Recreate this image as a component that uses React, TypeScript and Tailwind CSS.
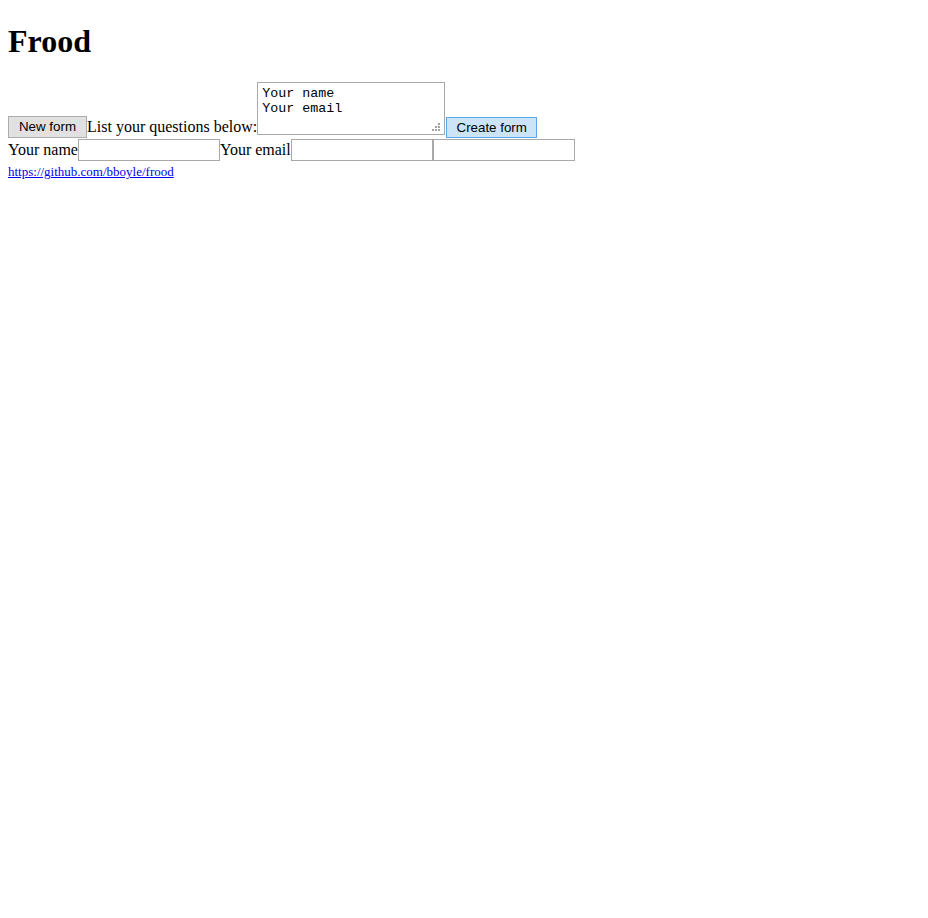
import { useState } from "react";

const serif = "font-['Liberation_Serif',serif]";
const sans = "font-['Liberation_Sans',Arial,sans-serif]";
const mono = "font-['Liberation_Mono',monospace]";

function Grip() {
  // little dotted resize handle, bottom right of the textarea
  const dots = [
    [6, 0],
    [3, 3], [6, 3],
    [0, 6], [3, 6], [6, 6],
  ];
  return (
    <svg width="8" height="8" viewBox="0 0 8 8" className="absolute right-[5px] bottom-[4px] pointer-events-none">
      {dots.map(([x, y], i) => (
        <rect key={i} x={x} y={y} width="2" height="2" fill="#a3a3a3" />
      ))}
    </svg>
  );
}

export default function App() {
  const [questions, setQuestions] = useState("Your name\nYour email");
  const [fields, setFields] = useState<Record<string, string>>({});
  const lines = questions.split("\n");

  return (
    <div className={`${serif} min-h-screen bg-white text-black px-2 text-[16px]`}>
      <h1 className="mt-[21px] mb-[20px] h-[39px] leading-[40px] text-[32px] font-bold">Frood</h1>

      <form className="flex items-end h-[59px]" onSubmit={(e) => e.preventDefault()}>
        <button
          type="button"
          className={`${sans} mb-[1px] h-[22px] w-[79px] border border-[#adadad] bg-[#e1e1e1] text-[13.33px] text-black`}
          onClick={() => setQuestions("")}
        >
          New form
        </button>
        <label className="mb-[3px] leading-[18px]">List your questions below:</label>
        <div className="relative mb-[4px]">
          <textarea
            value={questions}
            onChange={(e) => setQuestions(e.target.value)}
            className={`${mono} block h-[53px] w-[188px] resize-none border border-[#a9a9a9] px-[4px] pt-[3px] text-[13.33px] leading-[15px] outline-none`}
          />
          <Grip />
        </div>
        <button
          type="submit"
          className={`${sans} mb-[1px] ml-[1px] h-[21px] w-[91px] border border-[#5ea6ea] bg-[#cce4f7] text-[13.33px] text-black`}
        >
          Create form
        </button>
      </form>

      <div className="flex items-center h-[22px]">
        {lines.map((q, i) => (
          <span key={i} className="flex items-center">
            <span className="leading-[22px]">{q}</span>
            <input
              value={fields[q] ?? ""}
              onChange={(e) => setFields((f) => ({ ...f, [q]: e.target.value }))}
              className="h-[22px] w-[142px] border border-[#a9a9a9] outline-none px-[2px] text-[13.33px]"
            />
          </span>
        ))}
        <input className="h-[22px] w-[142px] border border-[#a9a9a9] outline-none px-[2px] text-[13.33px]" />
      </div>

      <div className="pt-[2px] leading-[18px] text-[13px]">
        <a href="https://github.com/bboyle/frood" className="text-[#0000ee] underline">
          https://github.com/bboyle/frood
        </a>
      </div>
    </div>
  );
}
